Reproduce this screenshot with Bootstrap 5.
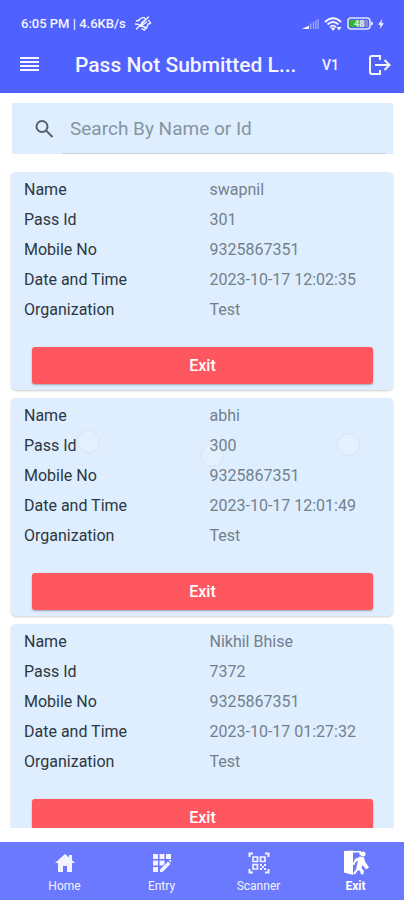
<!DOCTYPE html>
<html lang="en">
<head>
<meta charset="utf-8">
<meta name="viewport" content="width=device-width, initial-scale=1">
<title>Pass Not Submitted List</title>
<link href="https://cdn.jsdelivr.net/npm/bootstrap@5.3.0/dist/css/bootstrap.min.css" rel="stylesheet">
<style>
body { font-family: Roboto, "Liberation Sans", sans-serif; background: #fff; font-size: 16px; }
.app-head { background: #4f61ff; color: #f4f5ff; }
.status-line { height: 44px; padding: 3px 20px 0 21px; font-size: 13px; font-weight: 500; }
.tool-line { height: 49px; padding: 0 13px 7px 20px; }
.tool-line h1 { font-size: 21px; line-height: 28px; font-weight: 500; margin-left: 36px; }
.version { font-size: 14px; font-weight: 500; margin-right: 30px; }
.plain-btn { background: none; border: 0; padding: 0; color: inherit; line-height: 0; }
.app-list { padding: 10px 11px 0; margin-bottom: 14px; }
.search-box { background: #deeeff; height: 51px; margin: 0 0 18px 1px; padding: 0 7px 0 22px; }
.search-box input { height: 51px; font-size: 19px; color: #5d6873; border-bottom: 1px solid #c9d1dd; padding: 0 8px; margin-left: 7px; outline: 0; }
.search-box input::placeholder { color: #8595a1; opacity: 1; }
.pass-card { background: #deeeff; border: 0; border-radius: 5px; margin-bottom: 8px; padding: 3px 12px 6px 13px; box-shadow: 0 1px 2px rgba(60, 60, 60, .25); }
.pass-card dl { line-height: 30px; margin-bottom: 22px; }
.pass-card dt { font-weight: 400; color: #2c3741; }
.pass-card dd { color: #73808c; padding-left: 7px; }
.exit-btn { background: #ff575f; color: #fff; height: 37px; border-radius: 3px; font-size: 16px; font-weight: 500; margin: 0 8px; border: 0; padding: 0; box-shadow: 0 1px 2px rgba(90, 50, 60, .4); }
.touch-dot { width: 23px; height: 23px; border: 1px solid #d6e4f2; background: rgba(232, 243, 255, .5); pointer-events: none; }
.dot-a { left: 66px; top: 32px; }
.dot-b { left: 190px; top: 46px; }
.dot-c { left: 326px; top: 35px; }
.app-tabs { background: #6b79ff; height: 58px; padding-left: 16px; }
.app-tabs a { color: #f2f3ff; font-size: 12px; line-height: 16px; padding-top: 7px; }
.app-tabs svg { margin-bottom: 1px; }
.app-tabs a.active { color: #fff; font-weight: 700; }
</style>
<script src="https://cdn.jsdelivr.net/npm/bootstrap@5.3.0/dist/js/bootstrap.bundle.min.js"></script>
</head>
<body class="d-flex flex-column vh-100 overflow-hidden">
<header class="app-head flex-shrink-0">
  <div class="status-line d-flex align-items-center">
    <span>6:05 PM | 4.6KB/s</span>
    <svg class="ms-2" width="18" height="16" viewBox="0 0 17 16" fill="none" stroke="currentColor" stroke-width="1.4" stroke-linecap="round"><path d="M2 13 14 1M4 4.500C6 1.500 9 1 11 2.500M2 5l3-1M14 4.500c1.500 1 2 2 2 3l-2.500.5c-.5 2-1 3-1.500 4l-7-3M1 8l3 .5M7.500 13l2.500 1 1-1.500M7 7l4-3.500M8 9l4-3"/></svg>
    <svg class="ms-auto" width="19" height="12" viewBox="0 0 19 13" fill="currentColor"><path d="M0 12 8 8v4z"/><path opacity=".45" d="M9 6h1.500v6H9zM12 4h1.500v8H12zM14.500 2.500H16V12h-1.500zM17 1h1.500v11H17z"/></svg>
    <svg class="ms-1" width="19" height="14" viewBox="0 0 19 14" fill="none" stroke="currentColor" stroke-width="1.800"><path d="M1 5q8-7.500 16 0M3.500 7.500q5.500-5 11 0M6 10q3-2.800 6 0"/><path d="m7.500 11 1.500 2 1.500-2zM13 10l2 2.500L17 10" stroke-width="1.200" fill="currentColor"/></svg>
    <svg class="ms-1" width="27" height="14" viewBox="0 0 27 14"><rect x="1" y="1" width="22" height="11" rx="3" fill="none" stroke="#dfe4ff" stroke-width="1.600"/><path d="M24 4.500q2 0 2 2t-2 2z" fill="#dfe4ff"/><rect x="3" y="3" width="9" height="7" rx="1" fill="#35b52a"/><rect x="12" y="3" width="9" height="7" fill="#7c8cc8"/><text x="7" y="10" font-size="9" font-weight="700" fill="#e6eaff">48</text></svg>
    <svg class="ms-1" width="6" height="10" viewBox="0 0 7 12" fill="currentColor"><path d="M5 0 0 7h3l-1 5 5-7H4z"/></svg>
  </div>
  <div class="tool-line d-flex align-items-center">
    <button class="plain-btn" type="button" aria-label="Menu"><svg width="19" height="18" viewBox="0 0 19 18" fill="currentColor"><path d="M0 1h19v2H0zM0 5h19v2H0zM0 9h19v2H0zM0 13h19v2H0z"/></svg></button>
    <h1 class="mb-0 flex-grow-1 text-nowrap">Pass Not Submitted L...</h1>
    <span class="version">V1</span>
    <button class="plain-btn" type="button" aria-label="Log out"><svg width="22" height="20" viewBox="0 0 22 20" fill="none" stroke="currentColor" stroke-width="2"><path d="M11 5V1H3Q1 1 1 3v14q0 2 2 2h8v-4M6 10h14M15.500 5l5 5-5 5"/></svg></button>
  </div>
</header>

<main class="app-list flex-grow-1 overflow-hidden">
  <form class="search-box d-flex align-items-center" role="search">
    <label for="q" class="d-flex" aria-label="Search"><svg width="21" height="20" viewBox="0 0 20 20" fill="none" stroke="#52616b" stroke-width="2"><circle cx="7.500" cy="7.500" r="5.500"/><path d="m11.500 11.500 6.500 6.500"/></svg></label>
    <input id="q" class="flex-grow-1 border-top-0 border-start-0 border-end-0 bg-transparent" type="text" placeholder="Search By Name or Id">
  </form>

  <article class="card pass-card">
    <dl class="row gx-0">
      <dt class="col-6">Name</dt><dd class="col-6 mb-0">swapnil</dd>
      <dt class="col-6">Pass Id</dt><dd class="col-6 mb-0">301</dd>
      <dt class="col-6">Mobile No</dt><dd class="col-6 mb-0">9325867351</dd>
      <dt class="col-6">Date and Time</dt><dd class="col-6 mb-0 text-nowrap">2023-10-17 12:02:35</dd>
      <dt class="col-6">Organization</dt><dd class="col-6 mb-0">Test</dd>
    </dl>
    <button class="btn exit-btn" type="button">Exit</button>
  </article>

  <article class="card pass-card">
    <span class="touch-dot dot-a position-absolute rounded-circle"></span>
    <span class="touch-dot dot-b position-absolute rounded-circle"></span>
    <span class="touch-dot dot-c position-absolute rounded-circle"></span>
    <dl class="row gx-0 position-relative">
      <dt class="col-6">Name</dt><dd class="col-6 mb-0">abhi</dd>
      <dt class="col-6">Pass Id</dt><dd class="col-6 mb-0">300</dd>
      <dt class="col-6">Mobile No</dt><dd class="col-6 mb-0">9325867351</dd>
      <dt class="col-6">Date and Time</dt><dd class="col-6 mb-0 text-nowrap">2023-10-17 12:01:49</dd>
      <dt class="col-6">Organization</dt><dd class="col-6 mb-0">Test</dd>
    </dl>
    <button class="btn exit-btn" type="button">Exit</button>
  </article>

  <article class="card pass-card">
    <dl class="row gx-0">
      <dt class="col-6">Name</dt><dd class="col-6 mb-0">Nikhil Bhise</dd>
      <dt class="col-6">Pass Id</dt><dd class="col-6 mb-0">7372</dd>
      <dt class="col-6">Mobile No</dt><dd class="col-6 mb-0">9325867351</dd>
      <dt class="col-6">Date and Time</dt><dd class="col-6 mb-0 text-nowrap">2023-10-17 01:27:32</dd>
      <dt class="col-6">Organization</dt><dd class="col-6 mb-0">Test</dd>
    </dl>
    <button class="btn exit-btn" type="button">Exit</button>
  </article>
</main>

<nav class="app-tabs d-flex flex-shrink-0">
  <a href="#" class="d-flex flex-column align-items-center text-decoration-none w-25"><svg width="28" height="28" viewBox="0 0 28 28" fill="currentColor"><path d="M14 5 4 14h3v9h5v-6h4v6h5v-9h3l-3-2.700V6h-3v2.600z"/></svg>Home</a>
  <a href="#" class="d-flex flex-column align-items-center text-decoration-none w-25"><svg width="28" height="28" viewBox="0 0 28 28" fill="currentColor"><path d="M5 5h5v5H5zM11.500 5h5v5h-5zM18 5h5v5h-5zM5 11.500h5v5H5zM11.500 11.500h5v3.500l-1.500 1.500h-3.500zM5 18h5v5H5zM12 20.500l8-8 2.500 2.500-8 8H12zM21 11.500l1-1 1.500 1.500-1 1.500z"/></svg>Entry</a>
  <a href="#" class="d-flex flex-column align-items-center text-decoration-none w-25"><svg width="28" height="28" viewBox="0 0 28 28" fill="none" stroke="currentColor" stroke-width="2"><path d="M4.500 8V4.500H8M20 4.500h3.500V8M23.500 20v3.500H20M8 23.500H4.500V20"/><path stroke-width="1.700" d="M8 8h4.500v4.500H8zM15.500 8H20v4.500h-4.500zM8 15.500h4.500V20H8z"/><path stroke="none" fill="currentColor" d="M15 15h2v2h-2zM17 17h2v2h-2zM19 15h2v2h-2zM15 19h2v2h-2zM19 19h2v2h-2z"/></svg>Scanner</a>
  <a href="#" class="active d-flex flex-column align-items-center text-decoration-none w-25" aria-current="page"><svg width="28" height="28" viewBox="0 0 28 28" fill="currentColor"><path d="M2 2 11 1.500V26L2 23.500z"/><path d="M11 2h8v4h-1.500V3.500H11z"/><circle cx="21" cy="5" r="2.500"/><path d="m13 10 5-2.500 4 1 1 4 4 6-3 2-3.500-4.500-1 3 2.500 3-1 4-2.500-1.500 0-2-2.500-1.500-3 4.500-2-1 3-4 2-9-2.500 1.500-1 3-2-.5z"/></svg>Exit</a>
</nav>
</body>
</html>
